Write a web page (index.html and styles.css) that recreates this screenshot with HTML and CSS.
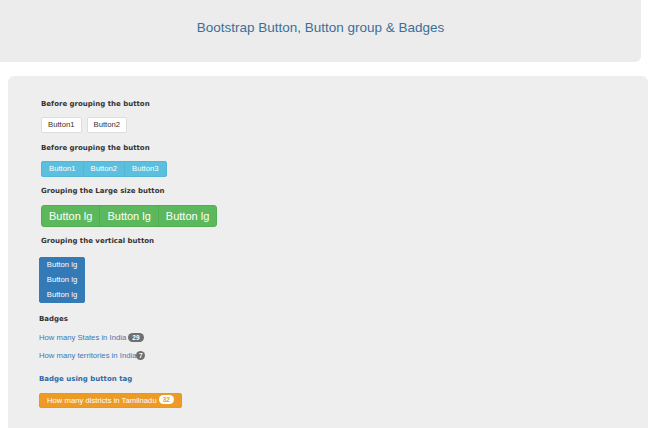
FILE: index.html
```html
<!DOCTYPE html>
<html lang="en">
<head>
    <meta charset="UTF-8">
    <meta name="viewport" content="width=device-width, initial-scale=1.0">
    <title>Bootstrap Button, Button group & Badges</title>
    <link rel="stylesheet" href="styles.css">
</head>
<body>
    <!-- header -->
    <div class="jumbotron">
        <h2 class="page-title">Bootstrap Button, Button group &amp; Badges</h2>
    </div>

    <!-- main box -->
    <div class="container">
        <h4 class="label">Before grouping the button</h4>
        <div class="btn-row">
            <button class="btn btn-default">Button1</button>
            <button class="btn btn-default">Button2</button>
        </div>

        <h4 class="label">Before grouping the button</h4>
        <div class="btn-group">
            <button class="btn btn-info">Button1</button>
            <button class="btn btn-info">Button2</button>
            <button class="btn btn-info">Button3</button>
        </div>

        <h4 class="label label-lg">Grouping the Large size button</h4>
        <div class="btn-group btn-group-lg">
            <button class="btn btn-success">Button lg</button>
            <button class="btn btn-success">Button lg</button>
            <button class="btn btn-success">Button lg</button>
        </div>

        <h4 class="label label-vertical">Grouping the vertical button</h4>
        <div class="lower">
            <div class="btn-group-vertical">
                <button class="btn btn-primary">Button lg</button>
                <button class="btn btn-primary">Button lg</button>
                <button class="btn btn-primary">Button lg</button>
            </div>

            <h4 class="label label-badges">Badges</h4>
            <p class="badge-line"><a href="#">How many States in India <span class="badge">29</span></a></p>
            <p class="badge-line badge-line-2"><a href="#">How many territories in India<span class="badge">7</span></a></p>

            <h4 class="label label-link">Badge using button tag</h4>
            <button class="btn btn-warning">How many districts in Tamilnadu<span class="badge">32</span></button>
        </div>
    </div>
</body>
</html>
```

FILE: styles.css
```css
body {
    margin: 0;
    padding: 0;
    background-color: #fff;
    font-family: "Liberation Sans", Arial, sans-serif;
    overflow: hidden;
}
/* header */
.jumbotron {
    width: 641px;
    height: 62px;
    box-sizing: border-box;
    padding-top: 20px;
    background-color: #ececec;
    border-radius: 0 0 6px 0;
    text-align: center;
}
.page-title {
    margin: 0;
    font-size: 13.5px;
    line-height: 16px;
    font-weight: normal;
    color: #3a6f9a;
}
/* main box */
.container {
    margin: 14px 0 0 8px;
    width: 640px;
    height: 352px;
    box-sizing: border-box;
    padding: 22px 0 0 33px;
    background-color: #eeeeee;
    border-radius: 6px 6px 0 0;
}
.label {
    margin: 9px 0 0;
    font-family: "DejaVu Sans", Verdana, sans-serif;
    font-size: 7px;
    line-height: 12px;
    font-weight: bold;
    color: #333;
}
.container > .label:first-child {
    margin-top: 0;
}
.label-lg,
.label-vertical {
    margin-top: 8px;
}
.btn {
    display: inline-block;
    margin: 0;
    font-family: "Liberation Sans", Arial, sans-serif;
    font-size: 7.7px;
    line-height: 14px;
    padding: 0 6px;
    border: 1px solid transparent;
    border-radius: 2px;
    cursor: pointer;
    white-space: nowrap;
}
.btn-row {
    display: flex;
    gap: 5px;
    margin-top: 7px;
}
.btn-default {
    background-color: #fff;
    color: #333;
    border-color: #ddd;
}
.btn-group {
    display: flex;
    margin-top: 7px;
}
.btn-group .btn {
    border-radius: 0;
}
.btn-group .btn + .btn {
    margin-left: -1px;
}
.btn-group .btn:first-child {
    border-radius: 2px 0 0 2px;
}
.btn-group .btn:last-child {
    border-radius: 0 2px 2px 0;
}
.btn-info {
    padding: 0 7px;
    background-color: #5bc0de;
    border-color: #52b6d4;
    color: #fff;
}
.btn-group-lg {
    margin-top: 8px;
}
.btn-group-lg .btn {
    font-size: 11px;
    line-height: 20px;
    padding: 0 7px;
}
.btn-group-lg .btn:first-child {
    border-radius: 3px 0 0 3px;
}
.btn-group-lg .btn:last-child {
    border-radius: 0 3px 3px 0;
}
.btn-success {
    background-color: #5cb85c;
    border-color: #53ad53;
    color: #fff;
}
/* lower part sits 2px further left */
.lower {
    margin-left: -2px;
}
.btn-group-vertical {
    display: flex;
    flex-direction: column;
    width: 46px;
    margin-top: 10px;
}
.btn-group-vertical .btn {
    padding: 0;
    text-align: center;
    border-radius: 0;
}
.btn-group-vertical .btn + .btn {
    margin-top: -1px;
}
.btn-group-vertical .btn:first-child {
    border-radius: 2px 2px 0 0;
}
.btn-group-vertical .btn:last-child {
    border-radius: 0 0 2px 2px;
}
.btn-primary {
    background-color: #337ab7;
    border-color: #337ab7;
    color: #fff;
}
.label-badges {
    margin-top: 10px;
}
.badge-line {
    margin: 7px 0 0;
    font-size: 7.7px;
    line-height: 12px;
}
.badge-line-2 {
    margin-top: 6px;
}
.badge-line a {
    color: #3a78b5;
    text-decoration: none;
}
.badge {
    display: inline-block;
    min-width: 9px;
    box-sizing: border-box;
    padding: 0 4px;
    font-size: 6.5px;
    line-height: 9px;
    font-weight: bold;
    color: #fff;
    text-align: center;
    vertical-align: middle;
    background-color: #6f6f6f;
    border-radius: 5px;
}
.badge-line-2 .badge {
    padding: 0 2px;
}
.label-link {
    margin-top: 11px;
    color: #2f6aa5;
}
.btn-warning {
    margin-top: 8px;
    padding: 0 7px;
    line-height: 13px;
    background-color: #ee9b26;
    border-color: #ec961e;
    color: #fff;
}
.btn-warning .badge {
    margin-left: 2px;
    background-color: #fff;
    color: #ee9b26;
    position: relative;
    top: -1px;
}
```
